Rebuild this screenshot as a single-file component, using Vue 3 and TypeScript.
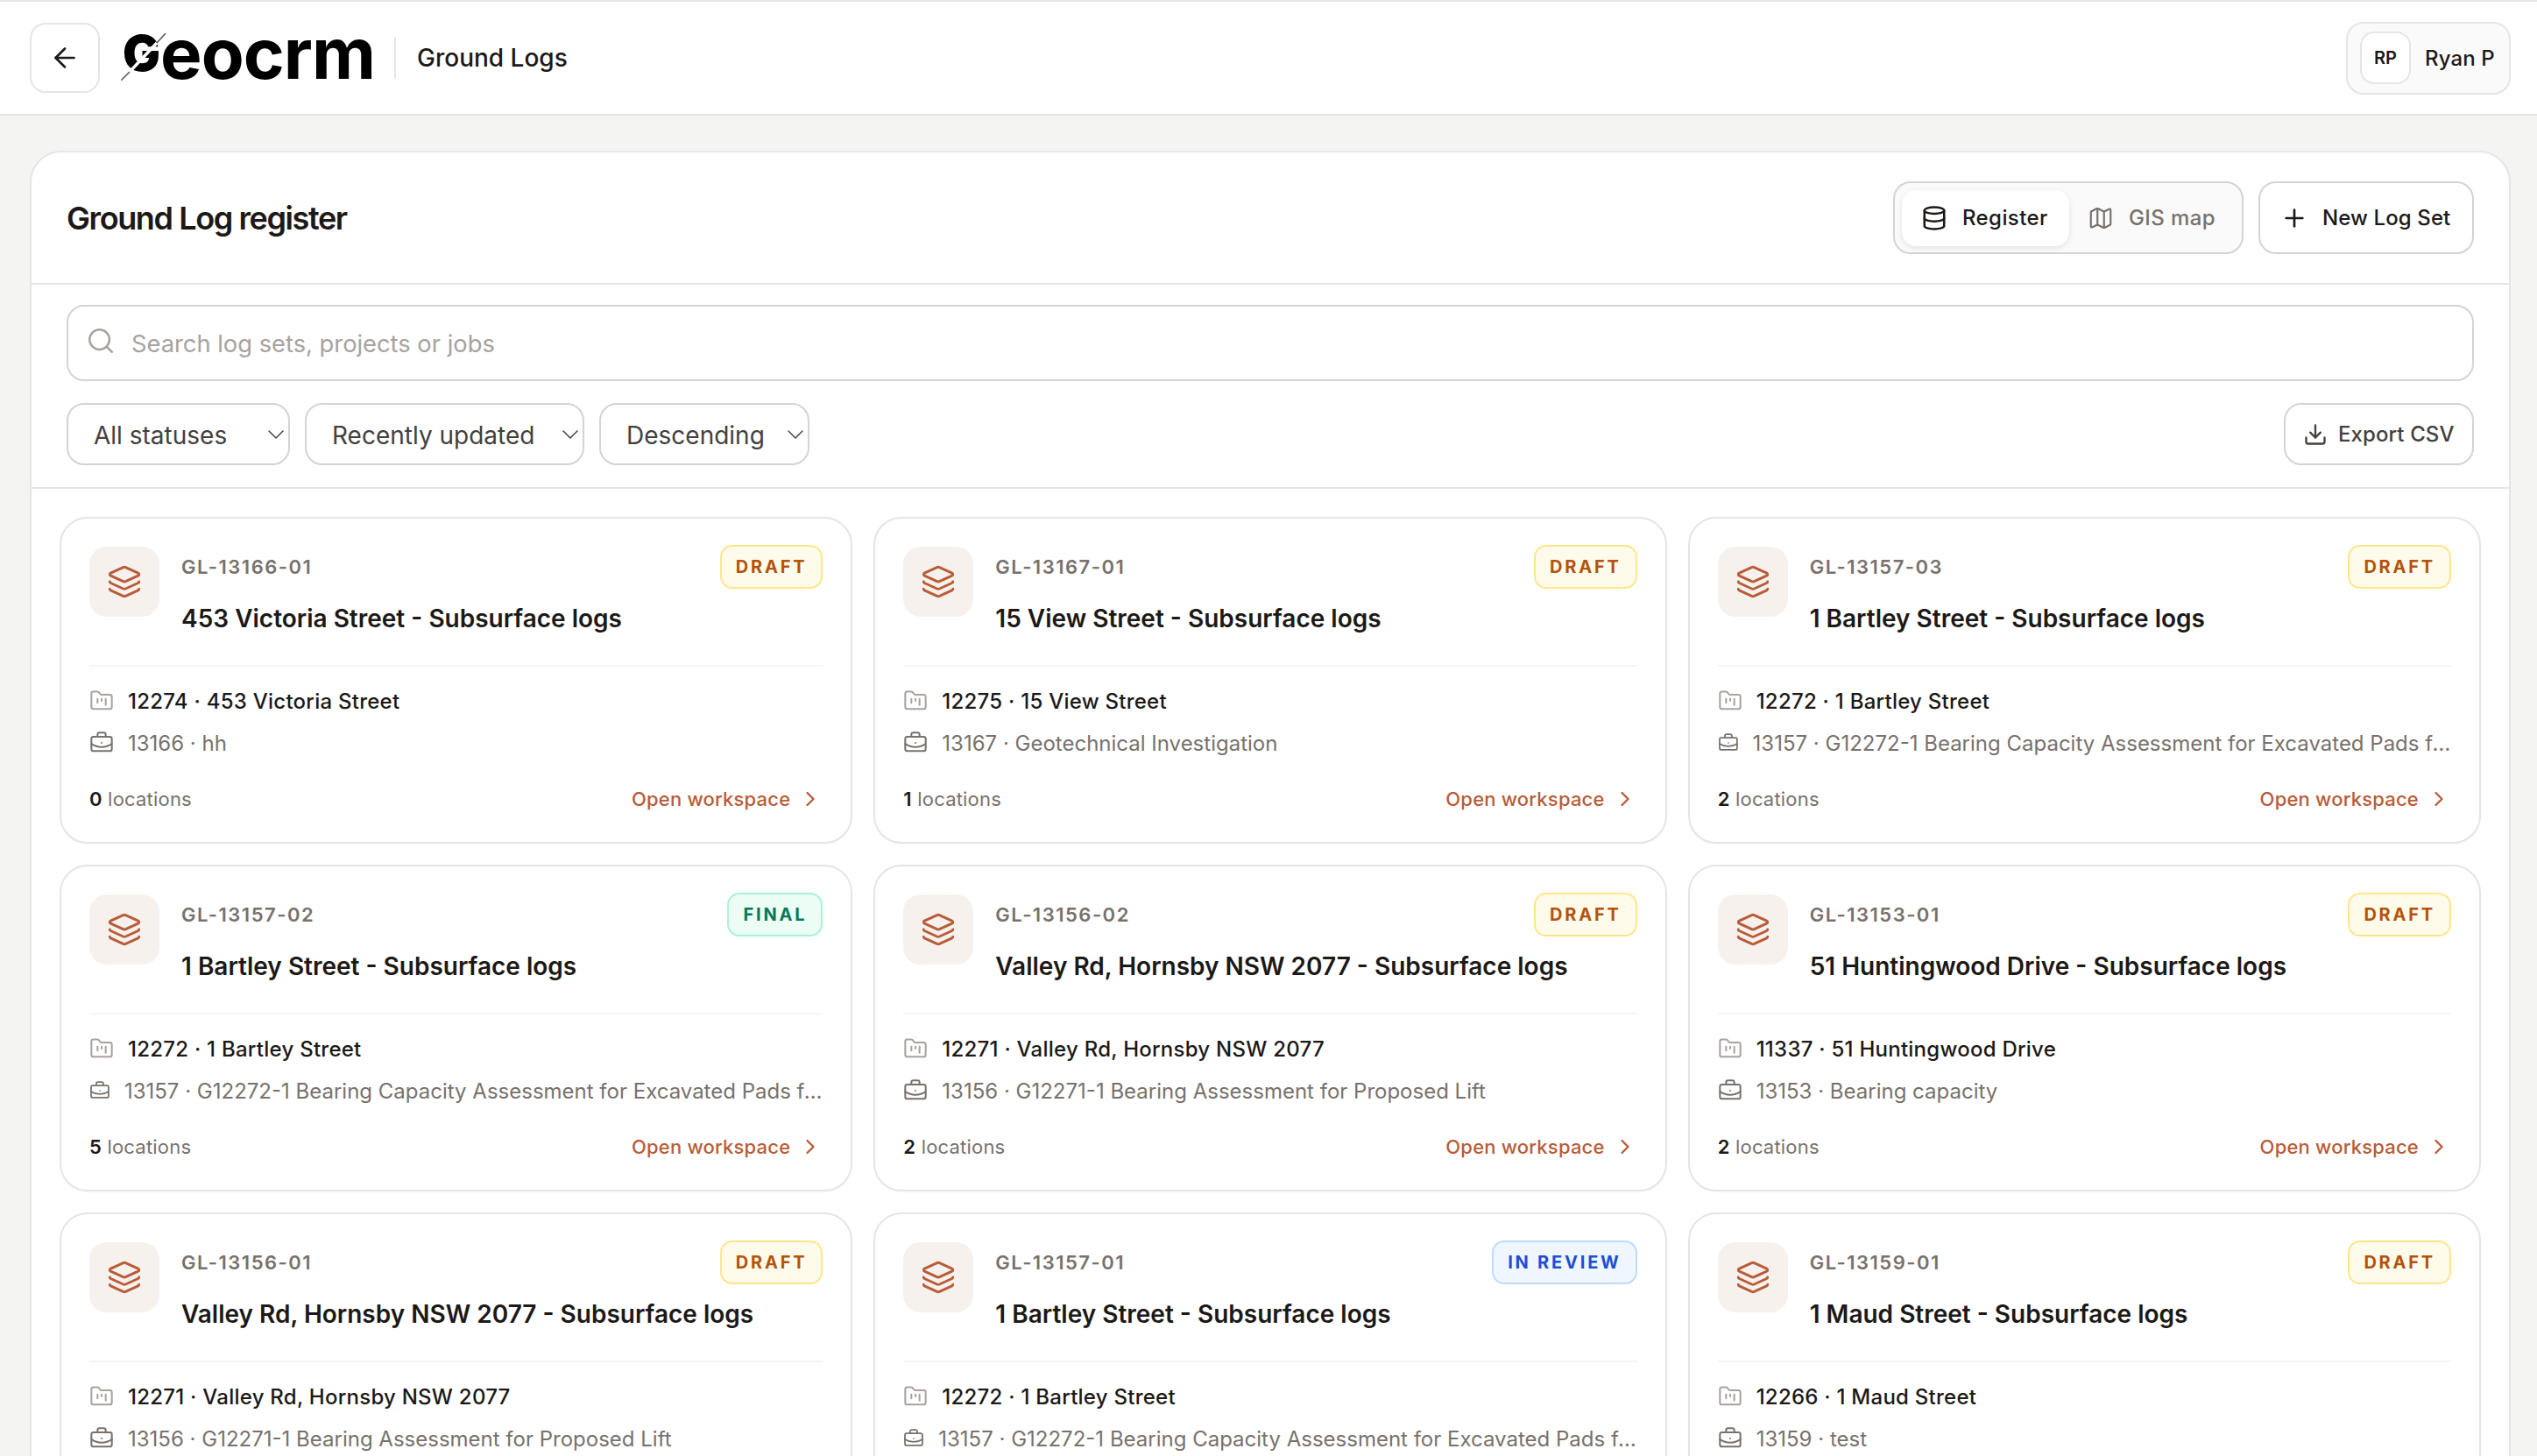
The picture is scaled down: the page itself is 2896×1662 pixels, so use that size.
<script setup lang="ts">
interface LogSet {
  id: string
  title: string
  status: 'DRAFT' | 'FINAL' | 'IN REVIEW'
  project: string
  job: string
  count: number
}

const LONG_JOB = '13157 · G12272-1 Bearing Capacity Assessment for Excavated Pads for Warehouse'

const logs: LogSet[] = [
  { id: 'GL-13166-01', title: '453 Victoria Street - Subsurface logs', status: 'DRAFT', project: '12274 · 453 Victoria Street', job: '13166 · hh', count: 0 },
  { id: 'GL-13167-01', title: '15 View Street - Subsurface logs', status: 'DRAFT', project: '12275 · 15 View Street', job: '13167 · Geotechnical Investigation', count: 1 },
  { id: 'GL-13157-03', title: '1 Bartley Street - Subsurface logs', status: 'DRAFT', project: '12272 · 1 Bartley Street', job: LONG_JOB, count: 2 },
  { id: 'GL-13157-02', title: '1 Bartley Street - Subsurface logs', status: 'FINAL', project: '12272 · 1 Bartley Street', job: LONG_JOB, count: 5 },
  { id: 'GL-13156-02', title: 'Valley Rd, Hornsby NSW 2077 - Subsurface logs', status: 'DRAFT', project: '12271 · Valley Rd, Hornsby NSW 2077', job: '13156 · G12271-1 Bearing Assessment for Proposed Lift', count: 2 },
  { id: 'GL-13153-01', title: '51 Huntingwood Drive - Subsurface logs', status: 'DRAFT', project: '11337 · 51 Huntingwood Drive', job: '13153 · Bearing capacity', count: 2 },
  { id: 'GL-13156-01', title: 'Valley Rd, Hornsby NSW 2077 - Subsurface logs', status: 'DRAFT', project: '12271 · Valley Rd, Hornsby NSW 2077', job: '13156 · G12271-1 Bearing Assessment for Proposed Lift', count: 1 },
  { id: 'GL-13157-01', title: '1 Bartley Street - Subsurface logs', status: 'IN REVIEW', project: '12272 · 1 Bartley Street', job: LONG_JOB, count: 3 },
  { id: 'GL-13159-01', title: '1 Maud Street - Subsurface logs', status: 'DRAFT', project: '12266 · 1 Maud Street', job: '13159 · test', count: 1 }
]

const filters = ['All statuses', 'Recently updated', 'Descending']

function badgeClass(status: LogSet['status']): string {
  if (status === 'FINAL') return 'badge-final'
  if (status === 'IN REVIEW') return 'badge-review'
  return 'badge-draft'
}
</script>

<template>
  <div class="page">
    <header class="topbar">
      <button class="back" type="button" aria-label="Back">
        <svg class="i i-back" viewBox="0 0 24 24"><path d="m12 19-7-7 7-7" /><path d="M19 12H5" /></svg>
      </button>
      <div class="logo">
        <span class="logo-g">G</span><span>eocrm</span>
        <svg class="logo-slash" viewBox="0 0 52 54">
          <path class="cut" d="M41 11 10 44" />
          <path class="tail" d="M51 0 41 11M10 44 0 54" />
        </svg>
      </div>
      <div class="top-title">Ground Logs</div>
      <div class="user">
        <span class="avatar">RP</span>
        <span class="user-name">Ryan P</span>
      </div>
    </header>

    <main class="main">
      <section class="panel">
        <div class="panel-head">
          <h1>Ground Log register</h1>
          <div class="actions">
            <div class="segment">
              <button class="seg active" type="button">
                <svg class="i i-seg" viewBox="0 0 24 24"><ellipse cx="12" cy="5" rx="9" ry="3" /><path d="M3 5V19A9 3 0 0 0 21 19V5" /><path d="M3 12A9 3 0 0 0 21 12" /></svg>
                Register
              </button>
              <button class="seg" type="button">
                <svg class="i i-seg" viewBox="0 0 24 24"><path d="M14.106 5.553a2 2 0 0 0 1.788 0l3.659-1.83A1 1 0 0 1 21 4.619v12.764a1 1 0 0 1-.553.894l-4.553 2.277a2 2 0 0 1-1.788 0l-4.212-2.106a2 2 0 0 0-1.788 0l-3.659 1.83A1 1 0 0 1 3 19.381V6.618a1 1 0 0 1 .553-.894l4.553-2.277a2 2 0 0 1 1.788 0z" /><path d="M15 5.764v15" /><path d="M9 3.236v15" /></svg>
                GIS map
              </button>
            </div>
            <button class="new" type="button">
              <svg class="i i-plus" viewBox="0 0 24 24"><path d="M5 12h14" /><path d="M12 5v14" /></svg>
              New Log Set
            </button>
          </div>
        </div>

        <div class="tools">
          <label class="search">
            <svg class="i i-search" viewBox="0 0 24 24"><path d="m21 21-4.34-4.34" /><circle cx="11" cy="11" r="8" /></svg>
            <input type="text" placeholder="Search log sets, projects or jobs" />
          </label>
          <div class="filter-row">
            <button v-for="f in filters" :key="f" class="filter" type="button">
              {{ f }}
              <svg class="i i-caret" viewBox="0 0 24 24"><path d="m6 9 6 6 6-6" /></svg>
            </button>
            <button class="export" type="button">
              <svg class="i i-export" viewBox="0 0 24 24"><path d="M12 15V3" /><path d="M21 15v4a2 2 0 0 1-2 2H5a2 2 0 0 1-2-2v-4" /><path d="m7 10 5 5 5-5" /></svg>
              Export CSV
            </button>
          </div>
        </div>

        <div class="grid">
          <article v-for="log in logs" :key="log.id" class="card">
            <div class="card-top">
              <span class="tile">
                <svg class="i i-layers" viewBox="0 0 24 24"><path d="M12.83 2.18a2 2 0 0 0-1.66 0L2.6 6.08a1 1 0 0 0 0 1.83l8.58 3.91a2 2 0 0 0 1.66 0l8.58-3.9a1 1 0 0 0 0-1.83z" /><path d="M2 12a1 1 0 0 0 .58.91l8.6 3.91a2 2 0 0 0 1.65 0l8.58-3.9A1 1 0 0 0 22 12" /><path d="M2 17a1 1 0 0 0 .58.91l8.6 3.91a2 2 0 0 0 1.65 0l8.58-3.9A1 1 0 0 0 22 17" /></svg>
              </span>
              <div class="heading">
                <div class="id-row">
                  <span class="log-id">{{ log.id }}</span>
                  <span class="badge" :class="badgeClass(log.status)">{{ log.status }}</span>
                </div>
                <h2>{{ log.title }}</h2>
              </div>
            </div>
            <div class="meta">
              <div class="meta-row project">
                <svg class="i i-meta i-folder" viewBox="0 0 24 24"><path d="M4 20h16a2 2 0 0 0 2-2V8a2 2 0 0 0-2-2h-7.93a2 2 0 0 1-1.66-.9l-.82-1.2A2 2 0 0 0 7.93 3H4a2 2 0 0 0-2 2v13c0 1.1.9 2 2 2Z" /><path d="M8 10v4" /><path d="M12 10v2" /><path d="M16 10v6" /></svg>
                <span class="meta-text">{{ log.project }}</span>
              </div>
              <div class="meta-row job">
                <svg class="i i-meta i-case" viewBox="0 0 24 24"><path d="M12 12h.01" /><path d="M16 6V4a2 2 0 0 0-2-2h-4a2 2 0 0 0-2 2v2" /><path d="M22 13a18.15 18.15 0 0 1-20 0" /><rect width="20" height="14" x="2" y="6" rx="2" /></svg>
                <span class="meta-text">{{ log.job }}</span>
              </div>
            </div>
            <div class="card-foot">
              <span class="count"><b>{{ log.count }}</b> locations</span>
              <span class="open">
                Open workspace
                <svg class="i i-chev" viewBox="0 0 24 24"><path d="m9 18 6-6-6-6" /></svg>
              </span>
            </div>
          </article>
        </div>
      </section>
    </main>
  </div>
</template>

<style>
html, body { margin: 0; height: 100%; overflow: hidden; background: #f4f4f2; }
</style>

<style scoped>
* { box-sizing: border-box; }
.page {
  height: 1662px;
  overflow: hidden;
  display: flex;
  flex-direction: column;
  background: #f4f4f2;
  font-family: Inter, "Liberation Sans", sans-serif;
  color: #1c1917;
}
button { font-family: inherit; cursor: pointer; }
.i { fill: none; stroke: currentColor; stroke-width: 2; stroke-linecap: round; stroke-linejoin: round; display: block; }

.topbar {
  flex: none;
  height: 132px;
  display: flex;
  align-items: center;
  padding: 0 30px 0 34px;
  background: #fff;
  border-top: 2px solid #e2e6e9;
  border-bottom: 2px solid #e7e5e4;
}
.back {
  width: 80px; height: 80px;
  border: 2px solid #e7e5e4; border-radius: 18px; background: #fff;
  display: flex; align-items: center; justify-content: center;
  color: #1c1917; padding: 0;
}
.i-back { width: 36px; height: 36px; stroke-width: 1.75; }
.logo {
  position: relative;
  margin-left: 26px;
  width: 286px;
  height: 56px;
  padding-bottom: 10px;
  display: flex;
  align-items: center;
  font-weight: 700;
  font-size: 80px;
  line-height: 46px;
  letter-spacing: -1px;
  color: #000;
}
.logo-g { font-size: 57px; font-weight: 900; letter-spacing: 0; }
.logo-slash { position: absolute; left: -2px; top: 0; width: 52px; height: 54px; }
.logo-slash path { fill: none; }
.logo-slash .cut { stroke: #fff; stroke-width: 3.5; }
.logo-slash .tail { stroke: #555; stroke-width: 1.5; }
.top-title {
  margin-left: 24px;
  padding-left: 24px;
  height: 48px;
  line-height: 48px;
  border-left: 2px solid #e7e5e4;
  font-size: 28px;
  font-weight: 500;
}
.user {
  margin-left: auto;
  width: 188px; height: 83px;
  display: flex; align-items: center; gap: 16px;
  padding: 0 14px;
  border: 2px solid #e7e5e4; border-radius: 20px; background: #fafafa;
}
.avatar {
  width: 58px; height: 60px;
  display: flex; align-items: center; justify-content: center;
  border: 2px solid #e7e5e4; border-radius: 16px; background: #fff;
  font-size: 20px; font-weight: 600;
}
.user-name { font-size: 24px; font-weight: 500; letter-spacing: .1px; white-space: nowrap; }

.main { flex: 1; min-height: 0; padding: 40px 30px 0 34px; }
.panel {
  background: #fff;
  border: 2px solid #e7e5e4;
  border-radius: 36px;
  height: 1600px;
  overflow: hidden;
}
.panel-head {
  height: 151px;
  display: flex; align-items: center; justify-content: space-between;
  padding: 0 40px;
  border-bottom: 2px solid #e7e5e4;
}
h1 { margin: 0; font-size: 36px; font-weight: 600; letter-spacing: -1.4px; }
.actions { display: flex; gap: 17px; }
.segment {
  height: 83px; width: 400px;
  display: flex; align-items: center; gap: 0;
  padding: 0 8px;
  border: 2px solid #d6d3d1; border-radius: 20px; background: #fafafa;
}
.seg {
  height: 64px; padding: 0 0 0 21px;
  display: flex; align-items: center; gap: 17px;
  background: transparent; border: 0; border-radius: 16px;
  font-size: 24px; font-weight: 500; letter-spacing: .4px; color: #78716c;
  white-space: nowrap;
}
.seg.active { padding-left: 22px; background: #fff; color: #1c1917; box-shadow: 0 2px 6px rgba(0,0,0,.1); width: 191px; }
.i-seg { width: 30px; height: 30px; flex: none; }
.seg:not(.active) .i-seg { stroke-width: 1.75; }
.new {
  width: 246px; height: 83px;
  display: flex; align-items: center; justify-content: flex-start; gap: 16px;
  padding: 0 0 0 23px;
  background: #fff; border: 2px solid #d6d3d1; border-radius: 20px;
  font-size: 24px; font-weight: 500; letter-spacing: .1px; color: #1c1917;
}
.i-plus { width: 32px; height: 32px; }

.tools {
  padding: 23px 40px 25px;
  border-bottom: 2px solid #e7e5e4;
  display: flex; flex-direction: column; gap: 25px;
}
.search {
  height: 87px;
  display: flex; align-items: center; gap: 18px;
  padding: 0 24px 0 20px;
  border: 2px solid #d6d3d1; border-radius: 20px;
  color: #a8a29e;
}
.i-search { width: 34px; height: 34px; margin-top: -6px; flex: none; stroke-width: 1.75; }
.search input {
  flex: 1; border: 0; outline: 0; padding: 2px 0 0; background: transparent;
  font-family: inherit; font-size: 27.3px; color: #1c1917;
}
.search input::placeholder { color: #a8a29e; opacity: 1; }
.filter-row { display: flex; gap: 17px; }
.filter {
  height: 71px; width: 255px; padding: 2px 0 0 29px;
  position: relative;
  display: flex; align-items: center;
  background: #fff; border: 2px solid #d6d3d1; border-radius: 20px;
  font-size: 28px; font-weight: 400; color: #44403c; white-space: nowrap;
}
.filter:nth-child(2) { width: 319px; }
.filter:nth-child(3) { width: 240px; }
.i-caret { position: absolute; right: -2px; top: 18px; width: 32px; height: 32px; stroke-width: 1.1; }
.export {
  margin-left: auto;
  width: 217px; height: 71px;
  display: flex; align-items: center; justify-content: flex-start; gap: 12px;
  padding: 0 0 0 20px;
  background: #fff; border: 2px solid #d6d3d1; border-radius: 20px;
  font-size: 24px; font-weight: 500; letter-spacing: .1px; color: #44403c;
}
.i-export { width: 28px; height: 28px; }

.grid {
  display: grid;
  grid-template-columns: repeat(3, minmax(0, 1fr));
  gap: 24px;
  padding: 32px;
}
.card {
  height: 373px;
  display: flex; flex-direction: column;
  padding: 32px 32px 0;
  background: #fff;
  border: 2px solid #e7e5e4;
  border-radius: 32px;
  box-shadow: 0 1px 2px rgba(0,0,0,.03);
  min-width: 0;
}
.card-top {
  display: flex; gap: 25px;
  height: 137px;
  border-bottom: 2px solid #f5f5f4;
  flex: none;
}
.tile {
  flex: none;
  width: 80px; height: 80px;
  display: flex; align-items: center; justify-content: center;
  background: #f6f1ec; border-radius: 20px;
  color: #b85c38;
}
.i-layers { width: 40px; height: 40px; stroke-width: 1.75; }
.heading { flex: 1; min-width: 0; }
.id-row { display: flex; justify-content: space-between; align-items: center; height: 50px; margin-top: -2px; }
.log-id { font-size: 22px; font-weight: 600; letter-spacing: 1.5px; color: #78716c; }
.badge {
  height: 50px; padding: 0 16px;
  display: flex; align-items: center;
  border: 2px solid; border-radius: 14px;
  font-size: 20px; font-weight: 700; letter-spacing: 2.8px;
}
.badge-draft { background: #fffbeb; border-color: #fde68a; color: #b45309; }
.badge-final { background: #ecfdf5; border-color: #a7f3d0; color: #047857; }
.badge-review { background: #eff6ff; border-color: #bfdbfe; color: #1d4ed8; }
h2 { margin: 11px 0 0; font-size: 28px; line-height: 46px; font-weight: 600; white-space: nowrap; }
.meta { padding-top: 21px; display: flex; flex-direction: column; gap: 12px; flex: none; }
.meta-row { height: 36px; display: flex; align-items: center; gap: 16px; min-width: 0; font-size: 24px; }
.meta-text { white-space: nowrap; overflow: hidden; text-overflow: ellipsis; min-width: 0; }
.project { color: #1c1917; font-weight: 500; letter-spacing: .25px; }
.project .i-meta { color: #a8a29e; }
.job { color: #78716c; letter-spacing: 0; }
.i-meta { width: 28px; height: 28px; stroke-width: 1.75; }
.card-foot { margin-top: 28px; display: flex; justify-content: space-between; align-items: center; height: 36px; }
.count { font-size: 22px; letter-spacing: .2px; color: #78716c; }
.count b { color: #1c1917; font-weight: 600; }
.open { display: flex; align-items: center; gap: 9px; font-size: 22px; font-weight: 500; letter-spacing: .2px; color: #b85c38; }
.i-chev { width: 28px; height: 28px; }
</style>
